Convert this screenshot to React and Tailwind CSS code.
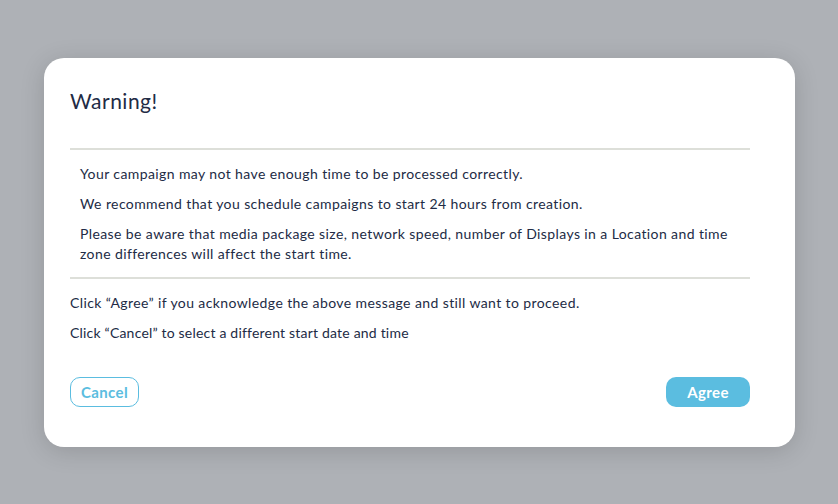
export default function App() {
  return (
    <div
      className="w-[838px] h-[504px] bg-[#aeb1b6] pt-[58px] pl-[44px]"
      style={{ fontFamily: "Lato, 'Noto Sans', sans-serif" }}
    >
      <div className="w-[751px] h-[389px] bg-white rounded-[20px] shadow-[0_4px_24px_rgba(0,0,0,0.15)] pl-[26px] pr-[45px] pt-[29px] text-[#222b45]">
        <h2 className="text-[21px] leading-[28px] h-[61px] tracking-[0.5px]">Warning!</h2>
        <div className="border-t-2 border-[#dddfd9]" />
        <div className="pl-[10px] pt-[14px] pb-[13px] text-[14px] leading-[20px] tracking-[0.4px] flex flex-col gap-[10px]">
          <p>Your campaign may not have enough time to be processed correctly.</p>
          <p>We recommend that you schedule campaigns to start 24 hours from creation.</p>
          <p>
            Please be aware that media package size, network speed, number of Displays in a Location and time
            zone differences will affect the start time.
          </p>
        </div>
        <div className="border-t-2 border-[#dddfd9]" />
        <div className="pt-[14px] text-[14px] leading-[20px] tracking-[0.4px] flex flex-col gap-[10px]">
          <p>Click “Agree” if you acknowledge the above message and still want to proceed.</p>
          <p className="tracking-[0.2px]">Click “Cancel” to select a different start date and time</p>
        </div>
        <div className="flex justify-between mt-[34px]">
          <button className="h-[30px] w-[69px] rounded-[10px] border border-[#5bbde0] text-[#5bbde0] text-[15px] tracking-[0.4px] font-bold">
            Cancel
          </button>
          <button className="h-[30px] w-[84px] rounded-[10px] bg-[#5bbde0] text-white text-[15px] tracking-[0.4px] font-bold">
            Agree
          </button>
        </div>
      </div>
    </div>
  );
}
